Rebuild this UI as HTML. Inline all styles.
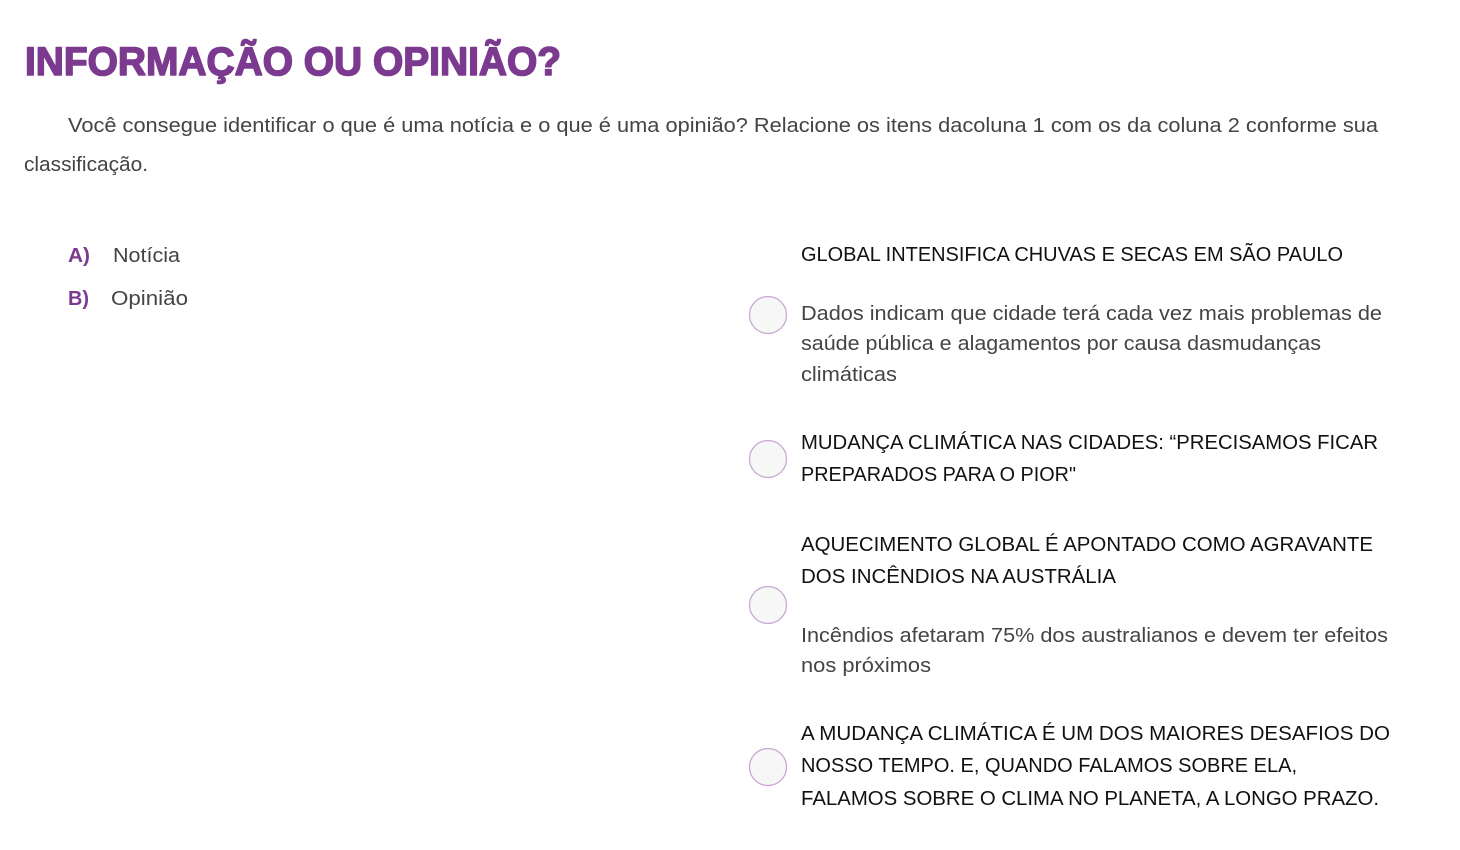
<!DOCTYPE html>
<html><head><meta charset="utf-8"><style>
html,body{margin:0;padding:0;background:#fff;width:1460px;height:850px;overflow:hidden}
svg{display:block}
text{font-family:"Liberation Sans",sans-serif}
.t{font-size:40px;font-weight:bold;fill:#7b3a8f;stroke:#7b3a8f;stroke-width:1.6;stroke-linejoin:round}
.p{font-size:20px;fill:#444}
.h{font-size:20px;fill:#111}
.b{font-size:20px;font-weight:bold;fill:#7b3a8f}
</style></head><body>
<svg width="1460" height="850" viewBox="0 0 1460 850" xmlns="http://www.w3.org/2000/svg">
<text class="t" x="25" y="75" textLength="536" lengthAdjust="spacingAndGlyphs">INFORMAÇÃO OU OPINIÃO?</text>
<text class="p" x="68" y="132" textLength="1310" lengthAdjust="spacingAndGlyphs">Você consegue identificar o que é uma notícia e o que é uma opinião? Relacione os itens dacoluna 1 com os da coluna 2 conforme sua</text>
<text class="p" x="24" y="171" textLength="124" lengthAdjust="spacingAndGlyphs">classificação.</text>

<text class="b" x="68" y="262" textLength="22" lengthAdjust="spacingAndGlyphs">A)</text>
<text class="p" x="113" y="262" textLength="67" lengthAdjust="spacingAndGlyphs">Notícia</text>
<text class="b" x="68" y="305" textLength="21" lengthAdjust="spacingAndGlyphs">B)</text>
<text class="p" x="111" y="305" textLength="77" lengthAdjust="spacingAndGlyphs">Opinião</text>

<text class="h" x="801" y="261" textLength="542" lengthAdjust="spacingAndGlyphs">GLOBAL INTENSIFICA CHUVAS E SECAS EM SÃO PAULO</text>

<g fill="#f8f7f8" stroke="#c9a6d2" stroke-width="1.3">
<circle cx="768" cy="315" r="18.5"/>
<circle cx="768" cy="459" r="18.5"/>
<circle cx="768" cy="605" r="18.5"/>
<circle cx="768" cy="767" r="18.5"/>
</g>

<text class="p" x="801" y="320" textLength="581" lengthAdjust="spacingAndGlyphs">Dados indicam que cidade terá cada vez mais problemas de</text>
<text class="p" x="801" y="350" textLength="520" lengthAdjust="spacingAndGlyphs">saúde pública e alagamentos por causa dasmudanças</text>
<text class="p" x="801" y="381" textLength="96" lengthAdjust="spacingAndGlyphs">climáticas</text>

<text class="h" x="801" y="449" textLength="577" lengthAdjust="spacingAndGlyphs">MUDANÇA CLIMÁTICA NAS CIDADES: “PRECISAMOS FICAR</text>
<text class="h" x="801" y="481" textLength="275" lengthAdjust="spacingAndGlyphs">PREPARADOS PARA O PIOR"</text>

<text class="h" x="801" y="551" textLength="572" lengthAdjust="spacingAndGlyphs">AQUECIMENTO GLOBAL É APONTADO COMO AGRAVANTE</text>
<text class="h" x="801" y="583" textLength="315" lengthAdjust="spacingAndGlyphs">DOS INCÊNDIOS NA AUSTRÁLIA</text>

<text class="p" x="801" y="642" textLength="587" lengthAdjust="spacingAndGlyphs">Incêndios afetaram 75% dos australianos e devem ter efeitos</text>
<text class="p" x="801" y="672" textLength="130" lengthAdjust="spacingAndGlyphs">nos próximos</text>

<text class="h" x="801" y="740" textLength="589" lengthAdjust="spacingAndGlyphs">A MUDANÇA CLIMÁTICA É UM DOS MAIORES DESAFIOS DO</text>
<text class="h" x="801" y="772" textLength="496" lengthAdjust="spacingAndGlyphs">NOSSO TEMPO. E, QUANDO FALAMOS SOBRE ELA,</text>
<text class="h" x="801" y="805" textLength="578" lengthAdjust="spacingAndGlyphs">FALAMOS SOBRE O CLIMA NO PLANETA, A LONGO PRAZO.</text>
</svg>
</body></html>
